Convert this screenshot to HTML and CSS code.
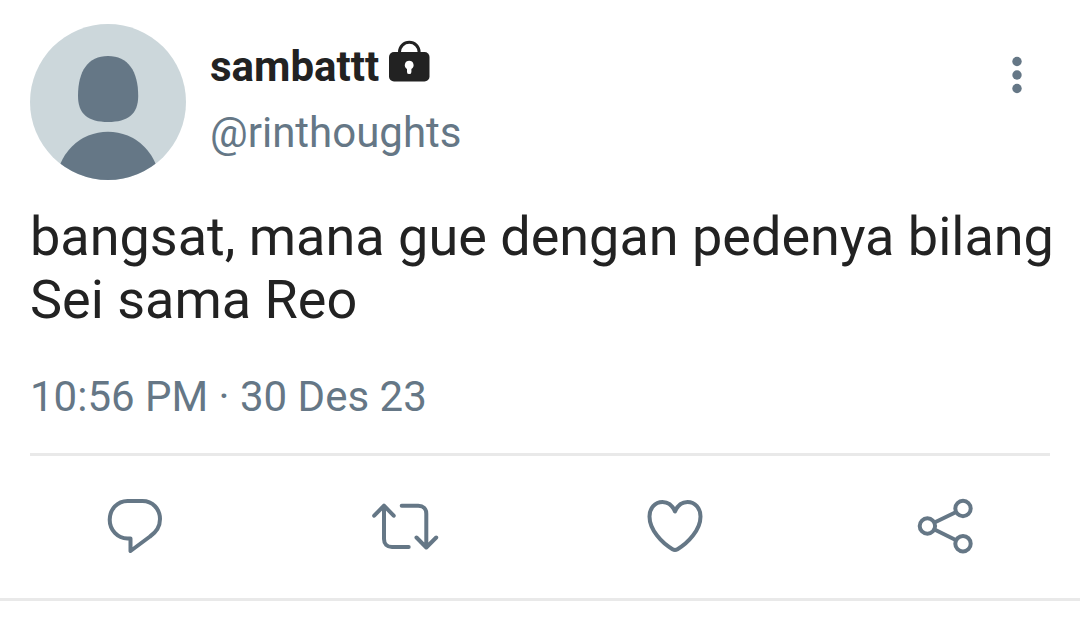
FILE: index.html
```html
<!DOCTYPE html>
<html lang="id">
<head>
  <meta charset="UTF-8">
  <meta name="viewport" content="width=device-width, initial-scale=1.0">
  <title>sambattt</title>
  <link rel="stylesheet" href="styles.css">
</head>
<body>
  <article class="tweet">
    <!-- Header -->
    <header class="tweet-header">
      <svg class="avatar" viewBox="0 0 156 156" aria-hidden="true">
        <defs>
          <clipPath id="avatarClip"><circle cx="78" cy="78" r="78" /></clipPath>
        </defs>
        <g clip-path="url(#avatarClip)">
          <rect width="156" height="156" fill="#ccd7db" />
          <path fill="#657786" d="M78 32c20 0 30.200 15 30.200 40 0 18-10.200 26-30.200 26s-30-8-30-26c0-25 10-40 30-40z" />
          <circle fill="#657786" cx="78" cy="159" r="51.300" />
        </g>
      </svg>
      <div class="author">
        <div class="name">
          <span>sambattt</span>
          <svg class="lock" viewBox="0 2 42 42" aria-hidden="true">
            <path d="M10.500 14v-2a9.800 9.800 0 0 1 19.600 0v2" fill="none" stroke="#222" stroke-width="3" />
            <rect y="12" width="40.500" height="29.500" rx="5" fill="#222" />
            <path d="M20.200 20.700a4.400 4.400 0 0 1 2.200 8.200v3a2.200 2.200 0 0 1-4.400 0v-3a4.400 4.400 0 0 1 2.200-8.200z" fill="#fff" />
          </svg>
        </div>
        <a class="handle" href="#">@rinthoughts</a>
      </div>
      <button class="more" type="button" aria-label="Menu">
        <svg width="12" height="38" viewBox="0 0 12 38">
          <circle cx="6" cy="5.500" r="4.700" />
          <circle cx="6" cy="19" r="4.700" />
          <circle cx="6" cy="32.500" r="4.700" />
        </svg>
      </button>
    </header>

    <!-- Text -->
    <p class="tweet-text">bangsat, mana gue dengan pedenya bilang Sei sama Reo</p>
    <time class="tweet-time" datetime="2023-12-30T22:56">10:56 PM · 30 Des 23</time>

    <!-- Actions -->
    <div class="actions">
      <button type="button" aria-label="Balas">
        <svg width="80" height="80" viewBox="0 0 80 80">
          <path d="M32.500 16h15C57.500 16 65 24 65 34c0 7-3.500 13-10 17.500L35.500 66V53.500h-3C22.500 53 14.700 45 14.700 34.700S22.500 16 32.500 16z" />
        </svg>
      </button>
      <button type="button" aria-label="Retweet">
        <svg width="90" height="80" viewBox="0 0 90 80">
          <path d="M14.200 30.700L24 20.700l9.700 10M24 21v33c0 5 3 8 8 8h16.700" />
          <path d="M41.700 20.700h16.600c5 0 8 3 8 8v33.500M56.500 52.500l9.800 10 9.900-10" />
        </svg>
      </button>
      <button type="button" aria-label="Suka">
        <svg width="80" height="80" viewBox="0 0 80 80">
          <path d="M40 26.500C37.500 20.500 33 17 27.500 17c-7.500 0-13 6-13 14.500C14.500 45 27 58 37.500 64.200q2.500 1.500 5 0C53 58 65.500 45 65.500 31.500c0-8.500-5.500-14.500-13-14.500C47 17 42.500 20.500 40 26.500z" />
        </svg>
      </button>
      <button type="button" aria-label="Bagikan">
        <svg width="80" height="80" viewBox="0 0 80 80">
          <path d="M29.500 37.500l21.200-10.200M29.500 44.500l21.200 10.500" />
          <circle cx="22.400" cy="41" r="7.700" />
          <circle cx="58" cy="23.500" r="7.700" />
          <circle cx="58" cy="58.700" r="7.700" />
        </svg>
      </button>
    </div>
  </article>
</body>
</html>
```

FILE: styles.css
```css
* {
  margin: 0;
  padding: 0;
  box-sizing: border-box;
}

body {
  font-family: Roboto, sans-serif;
  background-color: #fff;
  color: #222;
}

button {
  background: none;
  border: none;
  cursor: pointer;
}

svg {
  display: block;
}

.tweet {
  padding-top: 24px;
  border-bottom: 3px solid #e9e9e9;
}

/* Header */
.tweet-header {
  display: flex;
  align-items: flex-start;
  gap: 24px;
  padding: 0 42px 0 30px;
}

.avatar {
  width: 156px;
  height: 156px;
  flex-shrink: 0;
}

.author {
  flex: 1;
  display: flex;
  flex-direction: column;
  gap: 16px;
  padding-top: 18px;
  font-size: 42px;
  line-height: 50px;
}

.name {
  display: flex;
  gap: 10px;
  font-weight: 700;
}

.lock {
  width: 42px;
  height: 42px;
  overflow: visible;
}

.handle {
  color: #657786;
  text-decoration: none;
}

.more {
  padding: 32px 15px;
  fill: #657786;
}

/* Text */
.tweet-text {
  padding: 25px 24px 0 30px;
  font-size: 54px;
  line-height: 63px;
}

.tweet-time {
  display: block;
  margin: 0 30px;
  padding: 41px 0 31px;
  border-bottom: 3px solid #e9e9e9;
  color: #657786;
  font-size: 42px;
  line-height: 50px;
}

/* Actions */
.actions {
  display: grid;
  grid-template-columns: repeat(4, 1fr);
  justify-items: center;
  padding: 29px 0 33px;
}

.actions svg {
  fill: none;
  stroke: #657786;
  stroke-width: 4;
  stroke-linecap: round;
  stroke-linejoin: round;
}
```
